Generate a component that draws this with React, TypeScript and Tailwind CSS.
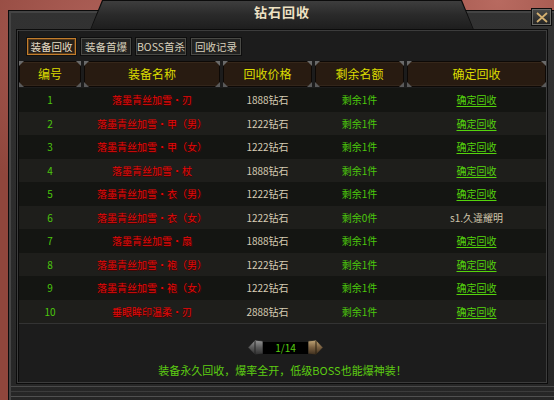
import React from "react";

const rows = [
  { id: 1, name: "落墨青丝加雪・刃", price: "1888钻石", left: "剩余1件", done: false },
  { id: 2, name: "落墨青丝加雪・甲（男）", price: "1222钻石", left: "剩余1件", done: false },
  { id: 3, name: "落墨青丝加雪・甲（女）", price: "1222钻石", left: "剩余1件", done: false },
  { id: 4, name: "落墨青丝加雪・杖", price: "1888钻石", left: "剩余1件", done: false },
  { id: 5, name: "落墨青丝加雪・衣（男）", price: "1222钻石", left: "剩余1件", done: false },
  { id: 6, name: "落墨青丝加雪・衣（女）", price: "1222钻石", left: "剩余0件", done: true },
  { id: 7, name: "落墨青丝加雪・扇", price: "1888钻石", left: "剩余1件", done: false },
  { id: 8, name: "落墨青丝加雪・袍（男）", price: "1222钻石", left: "剩余1件", done: false },
  { id: 9, name: "落墨青丝加雪・袍（女）", price: "1222钻石", left: "剩余1件", done: false },
  { id: 10, name: "垂眼眸印温柔・刃", price: "2888钻石", left: "剩余1件", done: false },
];

const tabs = ["装备回收", "装备首爆", "BOSS首杀", "回收记录"];

const cols = ["w-[62px]", "w-[136px]", "w-[89px]", "w-[89px]", "w-[139px]"];
const heads = ["编号", "装备名称", "回收价格", "剩余名额", "确定回收"];

const font = { fontFamily: '"Noto Sans CJK SC", "Liberation Sans", sans-serif' };

function HeadCell({ label, w }: { label: string; w: string }) {
  return (
    <div
      className={`${w} relative h-[26px] rounded-[4px] border border-[#0d0906] bg-[#281b11] shadow-[inset_0_1px_0_#36271a,inset_0_-1px_0_#33251a] flex items-center justify-center text-[12px] text-[#dcdc00]`}
    >
      <span className="absolute left-[-1px] top-[-1px] w-[5px] h-[5px] bg-[#6a6a6a] [clip-path:polygon(0_0,100%_0,0_100%)]" />
      <span className="absolute right-[-1px] top-[-1px] w-[5px] h-[5px] bg-[#6a6a6a] [clip-path:polygon(0_0,100%_0,100%_100%)]" />
      <span className="absolute left-[-1px] bottom-[-1px] w-[5px] h-[5px] bg-[#5a5a5a] [clip-path:polygon(0_0,0_100%,100%_100%)]" />
      <span className="absolute right-[-1px] bottom-[-1px] w-[5px] h-[5px] bg-[#5a5a5a] [clip-path:polygon(100%_0,100%_100%,0_100%)]" />
      {label}
    </div>
  );
}

export default function App() {
  return (
    <div className="relative w-[554px] h-[400px] overflow-hidden bg-[#8f463c] pl-[8px] pt-[10px]" style={font}>
      {/* reddish backdrop texture */}
      <div className="absolute inset-0 bg-[radial-gradient(circle_at_20%_10%,#b0625a_0,transparent_30%),radial-gradient(circle_at_90%_0%,#b86a60_0,transparent_25%)]" />

      <div className="relative w-[546px] h-[390px] flex flex-col bg-gradient-to-b from-[#323232] to-[#262626] border-l border-t border-[#0c0c0c] shadow-[inset_2px_2px_0_#444]">
        <div className="flex-1 flex ml-[8px] mt-[19px] mr-[7px] border border-[#3c3c3c] shadow-[0_0_0_1px_#0c0c0c]">
          <div className="flex-1 flex flex-col bg-[#1c1c1c] border-l border-[#0a0a0a]">
            {/* tabs */}
            <div className="flex gap-[3px] ml-[7px] mt-[6px]">
              {tabs.map((t, i) => (
                <div
                  key={t}
                  className={
                    i === 0
                      ? "w-[51px] h-[19px] whitespace-nowrap flex items-center justify-center text-[10.5px] text-[#e6dcc4] bg-[#24201b] border border-[#111] shadow-[inset_0_0_0_1px_#c27d2c,inset_0_0_0_2px_#5a3a18]"
                      : "w-[52px] h-[19px] whitespace-nowrap flex items-center justify-center text-[10.5px] text-[#d8d0bc] bg-[#222221] border border-[#0e0e0e] shadow-[inset_0_0_0_1px_#4a4a46]"
                  }
                >
                  {t}
                </div>
              ))}
            </div>

            {/* table head */}
            <div className="flex gap-[3px] mt-[5px]">
              {heads.map((h, i) => (
                <HeadCell key={h} label={h} w={cols[i]} />
              ))}
            </div>

            {/* rows */}
            <div className="mt-[1px] flex flex-col border-b border-[#333]">
              {rows.map((r, i) => (
                <div
                  key={r.id}
                  className={`flex gap-[3px] h-[23.5px] items-center text-[10px] ${i % 2 === 0 ? "bg-[#141512]" : "bg-[#1e1e1b]"}`}
                >
                  <div className={`${cols[0]} text-center text-[#4cc80c]`}>{r.id}</div>
                  <div className={`${cols[1]} text-center text-[#e40808] [text-shadow:1px_1px_0_#400]`}>{r.name}</div>
                  <div className={`${cols[2]} text-center text-[#d6ccb4]`}>{r.price}</div>
                  <div className={`${cols[3]} text-center text-[#4cc80c]`}>{r.left}</div>
                  <div className={`${cols[4]} text-center`}>
                    {r.done ? (
                      <span className="text-[#cfc4aa]">s1.久違耀明</span>
                    ) : (
                      <span className="text-[#55d40c] underline underline-offset-2">确定回收</span>
                    )}
                  </div>
                </div>
              ))}
            </div>

            {/* pager */}
            <div className="mt-[16px] flex items-center justify-center h-[15px] ml-[6px]">
              <svg width="15" height="15" viewBox="0 0 15 15">
                <defs>
                  <linearGradient id="lg" x1="0" y1="0" x2="0" y2="1">
                    <stop offset="0" stopColor="#9a9a9a" />
                    <stop offset="0.5" stopColor="#5a5a5a" />
                    <stop offset="1" stopColor="#2e2e2e" />
                  </linearGradient>
                </defs>
                <polygon points="0,7.5 7,0 15,1 15,14 7,15" fill="url(#lg)" stroke="#1a1a1a" strokeWidth="0.8" />
                <line x1="7" y1="1" x2="7" y2="14" stroke="#222" strokeWidth="1" />
              </svg>
              <div className="w-[45px] h-[12px] bg-black flex items-center justify-center text-[10px] leading-none text-[#58d010]">
                1/14
              </div>
              <svg width="15" height="15" viewBox="0 0 15 15">
                <defs>
                  <linearGradient id="rg" x1="0" y1="0" x2="0" y2="1">
                    <stop offset="0" stopColor="#c4a878" />
                    <stop offset="0.5" stopColor="#7a6040" />
                    <stop offset="1" stopColor="#3a2c1c" />
                  </linearGradient>
                </defs>
                <polygon points="15,7.5 8,0 0,1 0,14 8,15" fill="url(#rg)" stroke="#1a1a1a" strokeWidth="0.8" />
                <line x1="8" y1="1" x2="8" y2="14" stroke="#2a2010" strokeWidth="1" />
              </svg>
            </div>

            <div className="mt-[8px] text-center text-[11px] leading-[14px] text-[#5ccc12]">
              装备永久回收，爆率全开，低级BOSS也能爆神装！
            </div>
          </div>
        </div>

        {/* bottom frame lines */}
        <div className="h-[17px] flex flex-col pt-[3px] gap-[4px] ml-[2px]">
          <div className="h-[1px] bg-[#4a4a4a]" />
          <div className="h-[1px] bg-[#3c3c3c]" />
          <div className="h-[1px] bg-[#505050]" />
        </div>
      </div>

      {/* title plate */}
      <div className="absolute left-[90px] top-0 w-[384px] h-[30px] bg-[#0c0c0c] [clip-path:polygon(0_100%,12px_0,calc(100%-12px)_0,100%_100%)]">
        <div className="absolute inset-[1px] bg-gradient-to-b from-[#3e3e3e] via-[#2a2a2a] to-[#1e1e1e] [clip-path:polygon(0_100%,12px_0,calc(100%-12px)_0,100%_100%)] flex items-center justify-center">
          <span className="text-[13px] font-bold text-[#eee2c4] tracking-[1px] -mt-[6px]">钻石回收</span>
        </div>
      </div>

      {/* close */}
      <div className="absolute left-[531px] top-[8px] w-[21px] h-[18px] bg-gradient-to-b from-[#4a4a48] to-[#222] border border-[#0c0c0c] shadow-[inset_0_0_0_1px_#6a6a66] flex items-center justify-center">
        <svg width="12" height="11" viewBox="0 0 12 11">
          <path d="M1 1 L11 10 M11 1 L1 10" stroke="#d4b070" strokeWidth="1.8" />
        </svg>
      </div>
    </div>
  );
}
